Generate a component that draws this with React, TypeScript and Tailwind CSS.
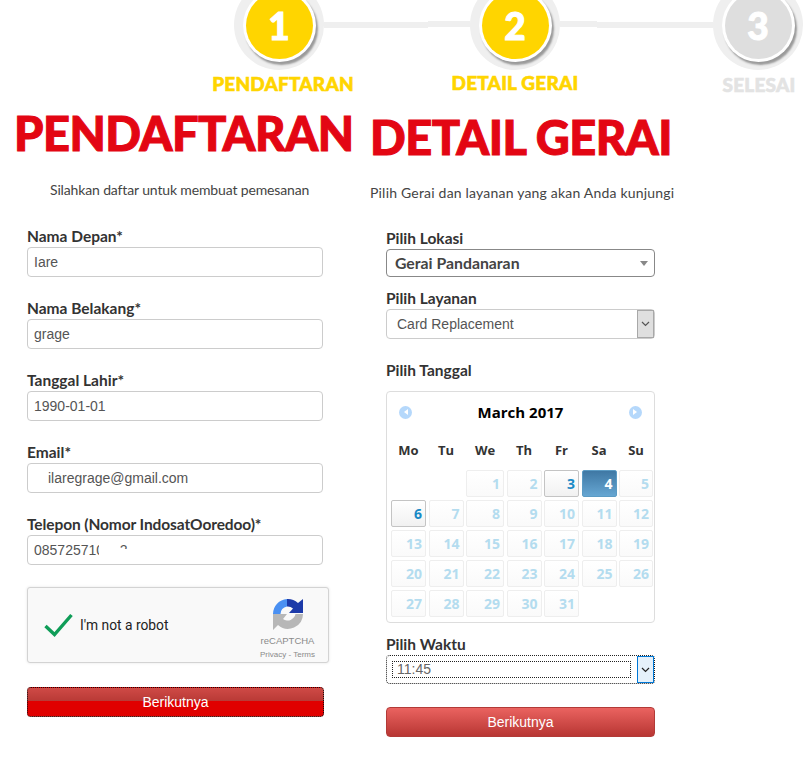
const steps = [
  { no: '1', label: 'PENDAFTARAN', active: true, labelClass: 'mt-[2px] ml-[8px] tracking-[0.2px]' },
  { no: '2', label: 'DETAIL GERAI', active: true, labelClass: 'mt-[1px] tracking-[0.2px]' },
  { no: '3', label: 'SELESAI', active: false, labelClass: 'mt-[3px] ml-[2px] tracking-[0.2px]' },
]

const fields = [
  { label: 'Nama Depan*', value: 'Iare' },
  { label: 'Nama Belakang*', value: 'grage' },
  { label: 'Tanggal Lahir*', value: '1990-01-01' },
  { label: 'Email*', value: 'ilaregrage@gmail.com', indent: true },
]

const weekdays = ['Mo', 'Tu', 'We', 'Th', 'Fr', 'Sa', 'Su']
const days = [0, 0, 1, 2, 3, 4, 5, 6, 7, 8, 9, 10, 11, 12, 13, 14, 15, 16, 17, 18, 19, 20, 21, 22, 23, 24, 25, 26, 27, 28, 29, 30, 31]

function StepCircle({ no, label, active, labelClass }: { no: string; label: string; active: boolean; labelClass: string }) {
  return (
    <div className="flex w-[90px] shrink-0 flex-col items-center">
      <div className="flex h-[90px] w-[90px] items-center justify-center rounded-full bg-[#efefef]">
        <div className="flex h-[73px] w-[73px] items-center justify-center rounded-full bg-white shadow-[2px_3px_2px_#9a9a9a]">
          <div className={`flex h-[67px] w-[67px] items-center justify-center rounded-full text-[37px] font-black leading-none text-white [-webkit-text-stroke:1px_#fff] ${active ? 'bg-[#ffd500]' : 'bg-[#dedede]'}`}>
            {no}
          </div>
        </div>
      </div>
      <div className={`whitespace-nowrap text-[19px] font-black leading-[24px] ${active ? 'text-[#ffd500] [-webkit-text-stroke:0.6px_#ffd500]' : 'text-[#e3e3e3] [-webkit-text-stroke:0.6px_#e3e3e3]'} ${labelClass}`}>
        {label}
      </div>
    </div>
  )
}

function ChevronBox({ focused }: { focused?: boolean }) {
  return (
    <div className={`flex w-[17px] shrink-0 items-center justify-center border ${focused ? 'border-[#0078d7] bg-[#e5f1fb]' : 'border-[#a8a8a8] bg-[#dfdfdf]'}`}>
      <svg width="9" height="6" viewBox="0 0 9 6" fill="none" stroke={focused ? '#222' : '#555'} strokeWidth="1.2">
        <path d="M1 1l3.5 3.5L8 1" />
      </svg>
    </div>
  )
}

function RecaptchaLogo() {
  return (
    <svg width="32" height="32" viewBox="0 0 32 32">
      <path d="M1 16A15 15 0 0 1 15 1V8.500A8 8 0 0 0 8.500 16Z" fill="#4a90f2" />
      <path d="M15 1A15 15 0 0 1 26 5L31 1V15H17L21 10.500A8 8 0 0 0 15 8.500Z" fill="#1c3aa9" />
      <path d="M31 16A15 15 0 0 1 6 27L1 32V16H15L11 21A8 8 0 0 0 23.500 16Z" fill="#b7b7b7" />
    </svg>
  )
}

export default function App() {
  return (
    <div className="h-[757px] w-[803px] overflow-hidden bg-white font-['Lato',sans-serif] text-[#333]">
      {/* stepper */}
      <div className="mt-[-20px] flex items-start pl-[234px]">
        <StepCircle {...steps[0]} />
        <div className="mt-[42px] h-[6px] w-[104px] shrink-0 bg-[#efefef]" />
        <div className="mt-[41px] h-[6px] w-[42px] shrink-0 bg-[#efefef]" />
        <StepCircle {...steps[1]} />
        <div className="mt-[41px] h-[6px] w-[37px] shrink-0 bg-[#efefef]" />
        <div className="mt-[42px] h-[6px] w-[116px] shrink-0 bg-[#efefef]" />
        <StepCircle {...steps[2]} />
      </div>

      <div className="mt-[8px] flex items-start">
        {/* left column */}
        <div className="w-[370px] shrink-0">
          <h1 className="pl-[14px] text-[47px] font-black leading-[56px] tracking-[-0.5px] text-[#e30613] whitespace-nowrap [-webkit-text-stroke:1px_#e30613]">PENDAFTARAN</h1>
          <p className="mt-[19px] pl-[50px] text-[14px] leading-[20px] tracking-[-0.14px] text-[#444]">Silahkan daftar untuk membuat pemesanan</p>

          <div className="mt-[27px] flex flex-col gap-[22px] pl-[27px]">
            {fields.map((f) => (
              <div key={f.label}>
                <div className="h-[20px] text-[15.5px] font-bold leading-[18px] text-[#333]">{f.label}</div>
                <div className={`flex h-[30px] w-[296px] items-center rounded-[4px] border border-[#ccc] font-['Liberation_Sans',sans-serif] text-[14px] text-[#555] ${f.indent ? 'pl-[20px]' : 'pl-[6px]'}`}>
                  {f.value}
                </div>
              </div>
            ))}
            <div>
              <div className="h-[20px] text-[15.5px] font-bold leading-[18px] tracking-[-0.1px] text-[#333]">Telepon (Nomor IndosatOoredoo)*</div>
              <div className="relative flex h-[30px] w-[296px] items-center rounded-[4px] border border-[#ccc] pl-[6px] font-['Liberation_Sans',sans-serif] text-[14px] text-[#555]">
                085725710&nbsp;&nbsp;&nbsp;&nbsp;2
                {/* number blurred out in the picture */}
                <div className="absolute left-[71px] top-[6px] h-[20px] w-[21px] bg-white" />
                <div className="absolute left-[90px] top-[13px] h-[14px] w-[24px] bg-white" />
              </div>
            </div>
          </div>

          {/* recaptcha */}
          <div className="ml-[27px] mt-[22px] flex h-[76px] w-[302px] items-center rounded-[3px] border border-[#d3d3d3] bg-[#f9f9f9] shadow-[0_0_3px_#e4e4e4]">
            <svg width="30" height="24" viewBox="0 0 30 24" className="ml-[16px]" fill="none" stroke="#0f9d58" strokeWidth="3.4">
              <path d="M1.500 13l9 8.500L27.500 2" />
            </svg>
            <span className="ml-[6px] font-['Roboto',sans-serif] text-[13.800px] text-[#222]">I'm not a robot</span>
            <div className="ml-auto mr-[13px] mt-[8px] flex flex-col items-center font-['Liberation_Sans',sans-serif] text-[#8a8a8a]">
              <RecaptchaLogo />
              <span className="mt-[5px] text-[9.500px] leading-[12px]">reCAPTCHA</span>
              <span className="mt-[3px] text-[8px] leading-[10px]">Privacy - Terms</span>
            </div>
          </div>

          <button className="ml-[27px] mt-[24px] block h-[30px] w-[297px] rounded-[4px] border border-dotted border-[#111] bg-[linear-gradient(#cf4a46,#b93a36_46%,#e00000_46%,#e00000)] font-['Liberation_Sans',sans-serif] text-[14px] text-white">
            Berikutnya
          </button>
        </div>

        {/* right column */}
        <div className="w-[320px] shrink-0 pt-[4px]">
          <h1 className="text-[47px] font-black leading-[56px] tracking-[-0.5px] text-[#e30613] whitespace-nowrap [-webkit-text-stroke:1px_#e30613]">DETAIL GERAI</h1>
          <p className="mt-[18px] text-[14px] leading-[20px] tracking-[0.2px] text-[#444]">Pilih Gerai dan layanan yang akan Anda kunjungi</p>

          <div className="ml-[16px] mt-[26px] w-[269px]">
            <div className="h-[20px] text-[15.5px] font-bold leading-[18px]">Pilih Lokasi</div>
            <div className="flex h-[28px] items-center justify-between rounded-[4px] border border-[#888] pl-[8px] pr-[6px] text-[15.8px] font-bold text-[#444]">
              Gerai Pandanaran
              <div className="h-0 w-0 border-x-[4px] border-t-[5px] border-x-transparent border-t-[#888]" />
            </div>

            <div className="mt-[12px] h-[20px] text-[15.5px] font-bold leading-[18px]">Pilih Layanan</div>
            <div className="flex h-[30px] rounded-[4px] border border-[#ccc] font-['Liberation_Sans',sans-serif] text-[14px] text-[#555]">
              <span className="flex-1 self-center pl-[10px]">Card Replacement</span>
              <ChevronBox />
            </div>

            <div className="mt-[22px] h-[20px] text-[15.5px] font-bold leading-[18px]">Pilih Tanggal</div>

            {/* calendar */}
            <div className="mt-[10px] h-[232px] rounded-[4px] border border-[#ddd] px-[4px] pt-[10px] font-['Open_Sans',sans-serif]">
              <div className="flex h-[20px] items-center justify-between px-[8px]">
                <div className="flex h-[13px] w-[13px] items-center justify-center rounded-full bg-[#b5d8fb]">
                  <div className="h-0 w-0 border-y-[3px] border-r-[4px] border-y-transparent border-r-white" />
                </div>
                <span className="text-[15px] font-bold text-black">March 2017</span>
                <div className="flex h-[13px] w-[13px] items-center justify-center rounded-full bg-[#b5d8fb]">
                  <div className="h-0 w-0 border-y-[3px] border-l-[4px] border-y-transparent border-l-white" />
                </div>
              </div>
              <div className="mt-[19px] grid grid-cols-[35px_35px_38px_35px_35px_35px_34px] gap-x-[2.5px] text-center text-[13px] font-bold leading-[18px] text-[#333]">
                {weekdays.map((d) => <span key={d}>{d}</span>)}
              </div>
              <div className="mt-[11px] grid grid-cols-[35px_35px_38px_35px_35px_35px_34px] auto-rows-[27px] gap-x-[2.5px] gap-y-[3px] text-right text-[14px] font-bold">
                {days.map((d, i) => {
                  if (d === 0) return <span key={i} />
                  const picked = d === 4
                  const today = d === 3 || d === 6
                  return (
                    <span
                      key={i}
                      className={`rounded-[2px] border pr-[3px] leading-[25px] ${
                        picked
                          ? 'border-[#5b9bc4] bg-[linear-gradient(#3f78a4,#66a6d2)] text-white'
                          : today
                            ? 'border-[#c4c4c4] bg-[linear-gradient(#fff,#f1f1f1)] text-[#1a8ac6]'
                            : 'border-[#eeeeee] bg-[linear-gradient(#fff,#fafafa)] text-[#b4dcef]'
                      }`}
                    >
                      {d}
                    </span>
                  )
                })}
              </div>
            </div>

            <div className="mt-[12px] h-[20px] text-[15.5px] font-bold leading-[18px]">Pilih Waktu</div>
            <div className="flex h-[29px] rounded-[4px] border border-dotted border-[#222] font-['Liberation_Sans',sans-serif] text-[14px] text-[#666]">
              <div className="m-[5px] mr-[6px] flex flex-1 items-center border border-dotted border-[#222] pl-[4px]">11:45</div>
              <ChevronBox focused />
            </div>

            <button className="mt-[23px] block h-[30px] w-[269px] rounded-[4px] border border-[#b23a37] bg-[linear-gradient(#ea6360,#b83633)] font-['Liberation_Sans',sans-serif] text-[14px] text-white">
              Berikutnya
            </button>
          </div>
        </div>
      </div>
    </div>
  )
}
